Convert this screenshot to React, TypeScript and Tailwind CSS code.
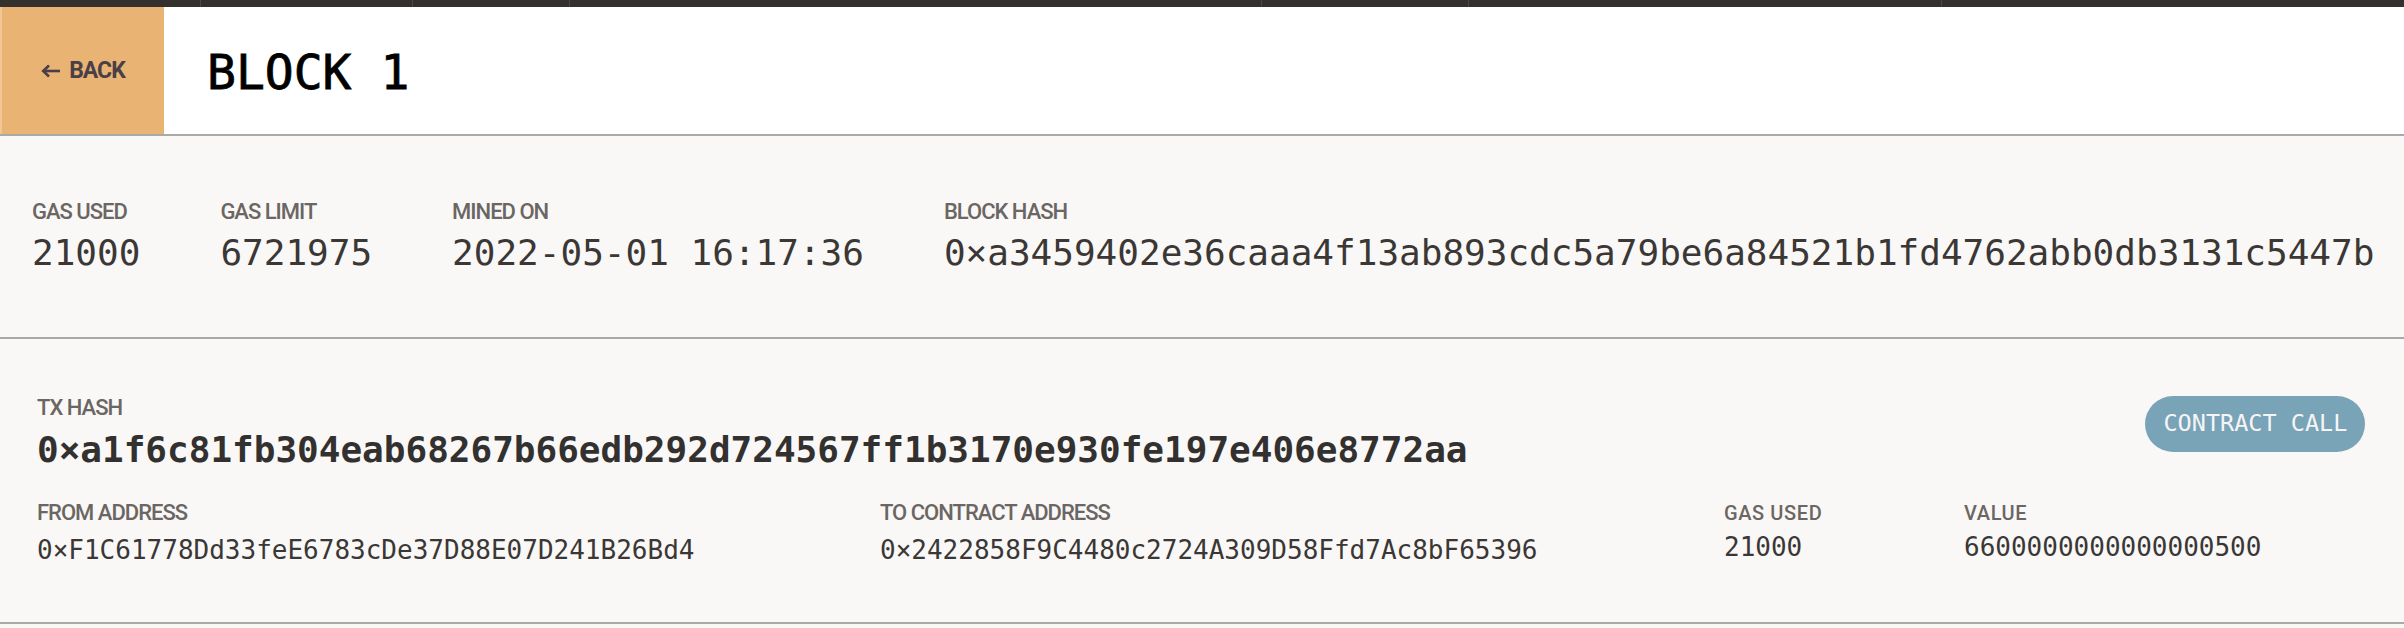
import React from 'react'

const label = "font-['Roboto',sans-serif] font-medium text-[22px] leading-[26px] tracking-[-1px] uppercase text-[#6b6663] whitespace-nowrap"
const labelSmall = "font-['Roboto',sans-serif] font-medium text-[20px] leading-[26px] tracking-[0.6px] uppercase text-[#6b6663] whitespace-nowrap"
const mono = "font-['DejaVu_Sans_Mono',monospace] whitespace-nowrap"

const TopBar = () => {
  // cropped app nav, only the bottom edge of the tabs is visible
  return (
    <div className="flex h-[7px] w-full bg-[#33302d]">
      <div className="w-[201px] border-r border-[#4c4844]" />
      <div className="w-[212px] border-r border-[#4c4844]" />
      <div className="w-[157px] border-r border-[#4c4844]" />
      <div className="w-[692px] border-r border-[#4c4844]" />
      <div className="w-[207px] border-r border-[#4c4844]" />
      <div className="w-[473px] border-r border-[#4c4844]" />
      <div className="flex-1" />
    </div>
  )
}

const Stat = ({ name, value }: { name: string; value: string }) => (
  <div className="flex flex-col">
    <div className={label}>{name}</div>
    <div className={`${mono} mt-[7px] text-[36px] leading-[42px] text-[#3a3735]`}>{value}</div>
  </div>
)

const App = () => {
  return (
    <div className="flex h-[628px] w-full flex-col bg-[#f9f8f6]">
      <TopBar />
      <div className="flex flex-1">
        <main className="flex flex-1 flex-col">
          {/* header */}
          <div className="flex h-[129px] border-b-2 border-[#a9a9a9] bg-white">
            <button className="flex w-[164px] items-center justify-center gap-[9px] border-l-2 border-[#f0c792] bg-[#e9b374] font-['Roboto',sans-serif] text-[23px] font-bold leading-[23px] tracking-[-1px] text-[#4b3f47]">
              <svg width="19" height="14" viewBox="0 0 19 14" fill="none" stroke="currentColor" strokeWidth="2.6">
                <path d="M19 7H3" />
                <path d="M8 1.5L2.2 7L8 12.5" />
              </svg>
              <span>BACK</span>
            </button>
            <h1 className={`${mono} mt-[2px] self-center pl-[43px] text-[48px] leading-[48px] text-black [-webkit-text-stroke:0.8px_black]`}>
              BLOCK 1
            </h1>
          </div>

          {/* block stats */}
          <div className="flex gap-[80px] border-b-2 border-[#a9a9a9] px-[32px] py-[63px]">
            <Stat name="Gas Used" value="21000" />
            <Stat name="Gas Limit" value="6721975" />
            <Stat name="Mined On" value="2022-05-01 16:17:36" />
            <Stat name="Block Hash" value="0×a3459402e36caaa4f13ab893cdc5a79be6a84521b1fd4762abb0db3131c5447b" />
          </div>

          {/* transaction */}
          <div className="border-b-2 border-[#a9a9a9] px-[37px] pt-[56px] pb-[57px]">
            <div className="flex items-start justify-between">
              <div className="flex flex-col">
                <div className={label}>TX Hash</div>
                <div className={`${mono} mt-[8px] text-[36px] font-bold leading-[42px] text-[#333130]`}>
                  0×a1f6c81fb304eab68267b66edb292d724567ff1b3170e930fe197e406e8772aa
                </div>
              </div>
              <div className={`${mono} mt-[1px] mr-[4px] flex h-[56px] items-center rounded-full bg-[#79a3b7] px-[18px] text-[23.5px] text-[#f5f5f5]`}>
                CONTRACT CALL
              </div>
            </div>

            <div className="mt-[29px] flex">
              <div className="flex w-[843px] flex-col">
                <div className={label}>From Address</div>
                <div className={`${mono} mt-[9px] text-[26px] leading-[30px] text-[#3a3735]`}>
                  0×F1C61778Dd33feE6783cDe37D88E07D241B26Bd4
                </div>
              </div>
              <div className="flex w-[844px] flex-col">
                <div className={label}>To Contract Address</div>
                <div className={`${mono} mt-[9px] text-[26px] leading-[30px] text-[#3a3735]`}>
                  0×2422858F9C4480c2724A309D58Ffd7Ac8bF65396
                </div>
              </div>
              <div className="flex w-[240px] flex-col">
                <div className={labelSmall}>Gas Used</div>
                <div className={`${mono} mt-[6px] text-[26px] leading-[30px] text-[#3a3735]`}>21000</div>
              </div>
              <div className="flex flex-col">
                <div className={labelSmall}>Value</div>
                <div className={`${mono} mt-[6px] text-[26px] leading-[30px] text-[#3a3735]`}>6600000000000000500</div>
              </div>
            </div>
          </div>
        </main>
        <div className="w-[4px] bg-[#1d1c1b]" />
      </div>
    </div>
  )
}

export default App
